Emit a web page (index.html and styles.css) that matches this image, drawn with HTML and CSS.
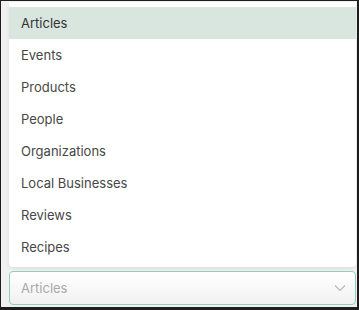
FILE: index.html
```html
<!DOCTYPE html>
<html>
<head>
<meta charset="utf-8">
<link rel="stylesheet" href="styles.css">
</head>
<body>
<div class="frame">
  <ul class="menu">
    <li class="opt active">Articles</li>
    <li class="opt">Events</li>
    <li class="opt">Products</li>
    <li class="opt">People</li>
    <li class="opt">Organizations</li>
    <li class="opt">Local Businesses</li>
    <li class="opt">Reviews</li>
    <li class="opt">Recipes</li>
  </ul>
  <div class="select">
    <span class="placeholder">Articles</span>
    <svg class="chev" width="12" height="8" viewBox="0 0 12 8"><path d="M1 1.5 L6 6.5 L11 1.5" fill="none" stroke="#b5b5b5" stroke-width="1.1"/></svg>
  </div>
</div>
</body>
</html>
```
FILE: styles.css
```css
html, body {
  margin: 0;
  padding: 0;
}
body {
  width: 359px;
  height: 310px;
  background: #1e1e1e;
  font-family: Inter, "Noto Sans", sans-serif;
}
.frame {
  box-sizing: border-box;
  margin: 1px 2px 0 1px;
  width: 356px;
  height: 306px;
  background: #f1f1f1;
  padding: 1px 1px 0 8px;
  display: flex;
  flex-direction: column;
  gap: 4px;
}
.menu {
  list-style: none;
  margin: 0;
  padding: 5px 0 4px;
  background: #fff;
  border-radius: 0 0 4px 4px;
  box-shadow: 0 2px 4px rgba(0,0,0,0.08);
}
.opt {
  height: 32px;
  display: flex;
  align-items: center;
  padding-left: 12px;
  font-size: 13px;
  color: #474747;
}
.opt.active {
  background: #d9e6df;
  color: #333333;
}
.select {
  box-sizing: border-box;
  height: 34px;
  border: 1px solid #8fd0b6;
  border-radius: 4px;
  background: linear-gradient(#ffffff, #f1f1f1);
  display: flex;
  align-items: center;
  justify-content: space-between;
  padding: 0 9px 0 11px;
}
.placeholder {
  font-size: 13px;
  color: #a9a9a9;
  margin-top: -1px;
}
.chev {
  display: block;
}
```
